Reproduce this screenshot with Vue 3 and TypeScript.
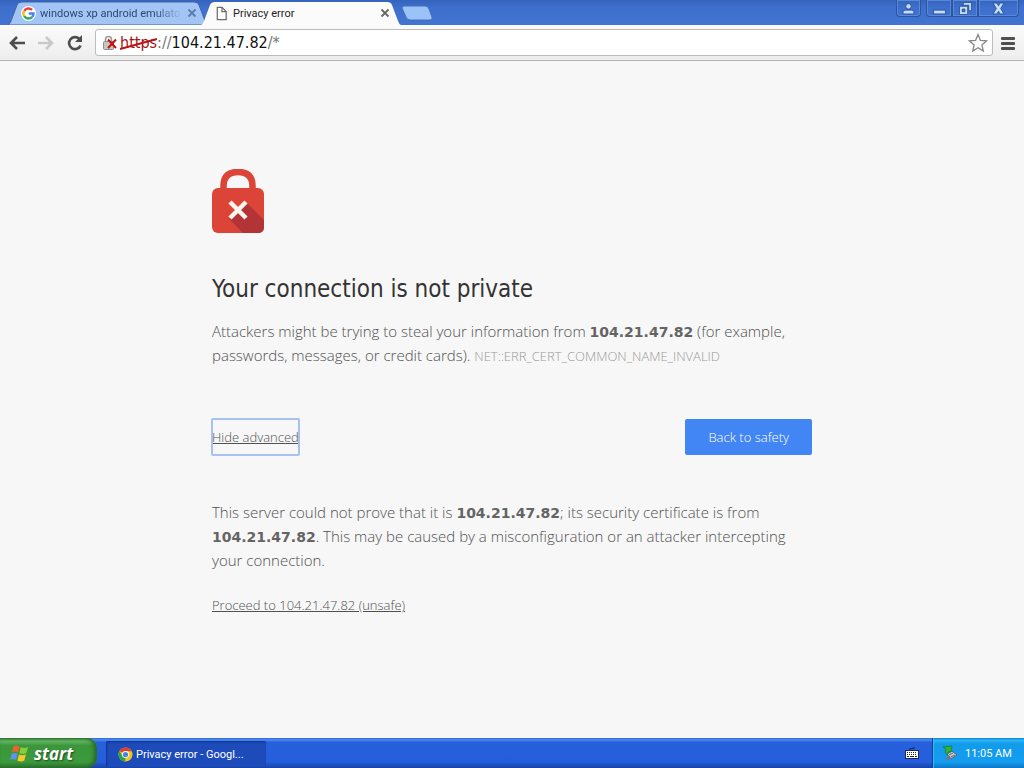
<script setup lang="ts">
import { ref } from 'vue'

const host = '104.21.47.82'
const address = ref(host)
const advancedOpen = ref(true)
</script>

<template>
  <div class="desktop">
    <header class="titlebar">
      <div class="tabs" role="tablist">
        <div class="tab" role="tab" aria-selected="false">
          <svg class="shape" viewBox="0 0 200 24" preserveAspectRatio="none" aria-hidden="true">
            <path d="M0 24Q2 23 3 20L9 4Q10 1 14 1H186Q190 1 191 4L197 20Q198 23 200 24Z" fill="#a3c5f6" stroke="#3e65a8" />
          </svg>
          <svg class="favicon" viewBox="0 0 16 16" aria-hidden="true">
            <circle cx="8" cy="8" r="8" fill="#fff" />
            <g fill="none" stroke-width="2.5">
              <path d="M3.4 5.2A5.4 5.4 0 0 1 11.8 4.2" stroke="#ea4335" />
              <path d="M3.4 5.2A5.4 5.4 0 0 0 3.4 10.8" stroke="#fbbc05" />
              <path d="M3.4 10.8A5.4 5.4 0 0 0 11.7 11.9" stroke="#34a853" />
              <path d="M11.7 11.9A5.4 5.4 0 0 0 13.4 8H8.3" stroke="#4285f4" />
            </g>
          </svg>
          <span class="tab-title faded">windows xp android emulato</span>
          <button class="tab-close" type="button" aria-label="Close tab">
            <svg viewBox="0 0 10 10"><path d="M1.5 1.5L8.5 8.5M8.5 1.5L1.5 8.5" stroke="#5b7cae" stroke-width="1.8" /></svg>
          </button>
        </div>
        <div class="tab active" role="tab" aria-selected="true">
          <svg class="shape" viewBox="0 0 200 24" preserveAspectRatio="none" aria-hidden="true">
            <path d="M0 24Q2 23 3 20L9 4Q10 1 14 1H186Q190 1 191 4L197 20Q198 23 200 24Z" fill="#fbfbfb" />
          </svg>
          <svg class="favicon" viewBox="0 0 16 16" aria-hidden="true">
            <path d="M3.5 1.5H8.5L13 6V14.5H3.5Z" fill="#fff" stroke="#6b6b6b" stroke-width="1.3" />
            <path d="M8.5 1.5V6H13" fill="none" stroke="#6b6b6b" stroke-width="1.3" />
          </svg>
          <span class="tab-title">Privacy error</span>
          <button class="tab-close" type="button" aria-label="Close tab">
            <svg viewBox="0 0 10 10"><path d="M1.5 1.5L8.5 8.5M8.5 1.5L1.5 8.5" stroke="#666" stroke-width="1.8" /></svg>
          </button>
        </div>
        <button class="new-tab" type="button" aria-label="New tab">
          <svg viewBox="0 0 32 16"><path d="M3 1H24Q27 1 28 4L31 12Q32 15 29 15H9Q6 15 5 12L1 3Q1 1 3 1Z" fill="#9cc3f7" stroke="#4470b8" /></svg>
        </button>
      </div>
      <div class="window-buttons">
        <button class="win user" type="button" aria-label="User">
          <svg viewBox="0 0 12 12"><circle cx="6" cy="4" r="2.5" /><path d="M1 11V9Q1 7.500 3 7.500H9Q11 7.500 11 9V11Z" /></svg>
        </button>
        <button class="win min" type="button" aria-label="Minimize">
          <svg viewBox="0 0 12 12"><rect x=".5" y="7.500" width="11" height="3.500" /></svg>
        </button>
        <button class="win max" type="button" aria-label="Restore">
          <svg viewBox="0 0 12 12"><path fill-rule="evenodd" d="M4 .5H11.5V8H9V3H4ZM.5 4H8V11.5H.5ZM3 6.5V9H5.5V6.5Z" /></svg>
        </button>
        <button class="win close" type="button" aria-label="Close">
          <svg viewBox="0 0 12 12"><path d="M1 1H4.5L6 3.5 7.500 1H11L8 6 11 11H7.500L6 8.500 4.500 11H1L4 6Z" /></svg>
        </button>
      </div>
    </header>

    <nav class="toolbar" aria-label="Navigation">
      <button class="nav" type="button" aria-label="Back">
        <svg viewBox="0 0 18 18"><path d="M17 9H4M9 3L3 9L9 15" fill="none" stroke="#4d4d4d" stroke-width="2.600" /></svg>
      </button>
      <button class="nav" type="button" aria-label="Forward" disabled>
        <svg viewBox="0 0 18 18"><path d="M1 9H14M9 3L15 9L9 15" fill="none" stroke="#c9c9c9" stroke-width="2.600" /></svg>
      </button>
      <button class="nav" type="button" aria-label="Reload">
        <svg viewBox="0 0 18 18"><path d="M14.600 11.500A6 6 0 1 1 13.300 4.800" fill="none" stroke="#4d4d4d" stroke-width="2.600" /><path d="M16 1V8H9Z" fill="#4d4d4d" /></svg>
      </button>
      <div class="omnibox">
        <svg class="broken-lock" viewBox="0 0 16 16" aria-hidden="true">
          <path d="M3.500 7V4.500Q3.500 1.500 6.500 1.500T9.500 4.500V7" fill="none" stroke="#999" stroke-width="1.600" />
          <rect x="1.500" y="6.500" width="10" height="8" rx="1" fill="#c8c4c0" stroke="#8f8f8f" />
          <path d="M6 4.500L14 13M14 4.500L6 13" stroke="#bd1410" stroke-width="2" />
        </svg>
        <span class="scheme">https<svg viewBox="0 0 36 12" preserveAspectRatio="none" aria-hidden="true"><path d="M0 11L36 1" stroke="#bb1018" stroke-width="2" /></svg></span>
        <label class="muted" for="address">://</label>
        <input id="address" v-model="address" class="address" type="text" size="10" />
        <span class="muted rest">/*</span>
        <button class="star" type="button" aria-label="Bookmark">
          <svg viewBox="0 0 20 20"><path d="M10 1.500L12.400 7.300L18.600 7.800L13.900 11.900L15.300 18L10 14.700L4.700 18L6.100 11.900L1.400 7.800L7.600 7.300Z" fill="#fff" stroke="#888" stroke-width="1.300" /></svg>
        </button>
      </div>
      <button class="menu" type="button" aria-label="Menu">
        <svg viewBox="0 0 14 14"><path d="M1 2.500H13M1 7.500H13M1 12.500H13" stroke="#505050" stroke-width="2.800" stroke-linecap="round" /></svg>
      </button>
    </nav>

    <main class="page">
      <div class="interstitial">
        <svg class="lock" viewBox="0 0 52 64" aria-hidden="true">
          <path d="M11.500 22V17Q11.500 3 26 3T40.500 17V22" fill="none" stroke="#db4437" stroke-width="6.500" />
          <rect y="19" width="52" height="45" rx="6" fill="#db4437" />
          <path d="M34 33L52 51V58Q52 64 46 64H31L17 50L26 41Z" fill="#b33436" />
          <path d="M18 33L34 49M34 33L18 49" stroke="#fff5ef" stroke-width="4.500" />
        </svg>
        <h1>Your connection is not private</h1>
        <p>
          Attackers might be trying to steal your information from <strong>{{ host }}</strong> (for example, passwords, messages, or credit cards).
          <span class="code">NET::ERR_CERT_COMMON_NAME_INVALID</span>
        </p>
        <div class="actions">
          <button class="details" type="button" :aria-expanded="advancedOpen" @click="advancedOpen = !advancedOpen">
            {{ advancedOpen ? 'Hide advanced' : 'Advanced' }}
          </button>
          <button class="safety" type="button">Back to safety</button>
        </div>
        <section v-if="advancedOpen">
          <p>
            This server could not prove that it is <strong>{{ host }}</strong>; its security certificate is from
            <strong>{{ host }}</strong>. This may be caused by a misconfiguration or an attacker intercepting your connection.
          </p>
          <a class="proceed" href="#proceed">Proceed to {{ host }} (unsafe)</a>
        </section>
      </div>
    </main>

    <footer class="taskbar">
      <button class="start" type="button">
        <svg viewBox="0 0 20 20" aria-hidden="true">
          <path d="M3.500 3.500Q6.500 1.500 9.500 3.500L8 9.500Q5 7.500 2 9.500Z" fill="#f0602c" />
          <path d="M10.800 4Q14 6 18 4L16.300 10Q13 12 9.300 10Z" fill="#86cf3c" />
          <path d="M1.700 10.800Q5 9 7.700 10.800L6 17Q3 15 0 17Z" fill="#5b94f0" />
          <path d="M9 11.400Q12 13 16 11.400L14.300 17.500Q11 19.500 7.300 17.500Z" fill="#fbc52c" />
        </svg>
        <span>start</span>
      </button>
      <button class="task" type="button">
        <svg viewBox="0 0 16 16" aria-hidden="true">
          <circle cx="8" cy="8" r="7.500" fill="#f5c51d" />
          <path d="M8 8L1.500 4.200A7.500 7.500 0 0 1 14.600 4.500H8Z" fill="#df3f30" />
          <path d="M1.500 4.200L5 10L8 11.500L7.500 15.500A7.500 7.500 0 0 1 1.500 4.200Z" fill="#2fa24e" />
          <circle cx="8" cy="8" r="3.700" fill="#fff" />
          <circle cx="8" cy="8" r="2.800" fill="#4485e8" />
        </svg>
        <span>Privacy error - Googl...</span>
      </button>
      <svg class="keyboard" viewBox="0 0 14 14" aria-hidden="true">
        <path d="M5 4V2.500H9V1" fill="none" stroke="#10246e" />
        <rect x=".5" y="4.500" width="13" height="8" fill="#fff" stroke="#17275e" />
        <path d="M2 6.500H12M2 8.500H12" stroke="#222" stroke-dasharray="1 1" />
        <path d="M2 10.500H12" stroke="#222" stroke-dasharray="2 1 4 1" />
      </svg>
      <div class="tray">
        <svg viewBox="0 0 16 16" aria-hidden="true">
          <path d="M5 9L10 6L15 10L9 14Z" fill="#c3cad0" stroke="#566270" />
          <path d="M7 10L11 8M9 12L13 10" stroke="#59646f" />
          <path d="M3 13L8 11L9 14L5 15.500Z" fill="#687a89" />
          <path d="M1 2L10 1L9 7L7 6L5 10L3 7L4 4Z" fill="#2eb53a" stroke="#15792b" stroke-width=".7" />
        </svg>
        <time>11:05 AM</time>
      </div>
    </footer>
  </div>
</template>

<style>
body { margin: 0; }
</style>

<style scoped>
* { box-sizing: border-box; }
.desktop {
  min-height: 100vh;
  display: flex;
  flex-direction: column;
  background: #f7f7f7;
  font-family: "Open Sans", "Noto Sans", sans-serif;
}
button { margin: 0; padding: 0; border: 0; background: none; font: inherit; color: inherit; }
svg { display: block; flex: none; }
.titlebar {
  height: 25px;
  display: flex;
  justify-content: space-between;
  align-items: flex-start;
  background: linear-gradient(#3564bc, #3e6fcd 30%, #4274d2);
}
.tabs { display: flex; padding: 1px 0 0 8px; }
.tab {
  position: relative;
  isolation: isolate;
  width: 200px;
  height: 24px;
  display: flex;
  align-items: center;
  gap: 4px;
  padding: 0 11px 0 13px;
  font-family: Roboto, sans-serif;
  font-size: 11px;
  color: #2b4672;
}
.tab.active { margin-left: -7px; color: #1e1e1e; z-index: 1; }
.shape { position: absolute; inset: 0; z-index: -1; width: 100%; height: 100%; }
.favicon { width: 15px; height: 15px; }
.tab-title { flex: 1; white-space: nowrap; }
.faded { mask-image: linear-gradient(90deg, #000 80%, transparent); }
.tab-close svg { width: 10px; height: 10px; }
.new-tab { align-self: flex-start; margin-top: 4px; }
.new-tab svg { width: 32px; height: 16px; }
.window-buttons { display: flex; padding-right: 5px; }
.win {
  height: 17px;
  display: grid;
  place-items: center;
  border: 1px solid #2c559f;
  border-top: 0;
  border-radius: 0 0 4px 4px;
  box-shadow: inset 0 0 0 1px #5a88d8;
}
.win svg { width: 13px; height: 13px; fill: #c4dcfb; stroke: #234684; stroke-width: .7; }
.user { width: 25px; margin-right: 5px; }
.min { width: 26px; border-radius: 0 0 0 4px; }
.max { width: 26px; border-radius: 0; }
.close { width: 41px; border-radius: 0 0 4px 0; }
.toolbar {
  height: 36px;
  display: flex;
  align-items: center;
  gap: 11px;
  padding: 0 9px 0 8px;
  background: linear-gradient(#fbfbfb, #ededed);
  border-bottom: 1px solid #b5b5b5;
}
.nav svg { width: 18px; height: 18px; }
.omnibox {
  flex: 1;
  height: 27px;
  display: flex;
  align-items: center;
  padding: 0 4px 0 6px;
  background: #fff;
  border: 1px solid #bcbcbc;
  border-radius: 3px;
  font-family: "DejaVu Sans Condensed", "DejaVu Sans", sans-serif;
  font-stretch: condensed;
  font-size: 16px;
}
.broken-lock { width: 16px; height: 16px; margin-right: 2px; }
.scheme { position: relative; color: #a31515; }
.scheme svg { position: absolute; left: 0; top: 5px; width: 100%; height: 12px; }
.muted { color: #777; }
.rest { flex: 1; }
.address {
  field-sizing: content;
  padding: 0;
  border: 0;
  outline: 0;
  background: none;
  font: inherit;
  color: #111;
}
.star svg { width: 20px; height: 20px; }
.menu { margin-left: -3px; }
.menu svg { width: 14px; height: 14px; }
.page { flex: 1; padding: 108px 24px 24px; }
.interstitial { max-width: 600px; margin: 0 auto; color: #505050; font-size: 15px; font-weight: 300; line-height: 24px; }
.lock { width: 52px; height: 64px; margin-bottom: 41px; }
h1 {
  margin: 0 0 14px;
  font-family: "DejaVu Sans Condensed", "DejaVu Sans", sans-serif;
  font-stretch: condensed;
  font-size: 24px;
  line-height: 31px;
  font-weight: 400;
  color: #333;
}
p { margin: 0; }
strong { font: bold 14px/1 "DejaVu Sans", sans-serif; color: #646464; }
.code { font-size: 13px; color: #999; }
.actions { display: flex; justify-content: space-between; margin: 51px 0 45px; font-size: 13px; }
.details {
  height: 36px;
  text-decoration: underline;
  border-radius: 1px;
  outline: 2px solid #a5c2f1;
  outline-offset: -1px;
}
.safety { height: 36px; padding: 0 23px; background: #4285f4; color: #fff; border-radius: 2px; }
.proceed { display: inline-block; margin-top: 21px; font-size: 13px; color: #505050; }
.taskbar {
  height: 30px;
  display: flex;
  align-items: stretch;
  color: #fff;
  font-family: Roboto, sans-serif;
  font-size: 11px;
  background: linear-gradient(#3168d5, #4a8bf1 6%, #2860db 14%, #245edc 80%, #1941a5);
}
.start {
  width: 97px;
  display: flex;
  align-items: center;
  gap: 4px;
  padding-left: 10px;
  border-radius: 0 10px 10px 0;
  background: linear-gradient(#388238, #66b866 10%, #3c963c 25%, #3c9a3c 80%, #2c712c);
  box-shadow: inset -3px 0 4px #24682a;
  font: italic bold 17px "Open Sans", sans-serif;
  text-shadow: 1px 1px 2px #1d471d;
}
.start svg { width: 20px; height: 20px; }
.task {
  width: 160px;
  height: 26px;
  margin: 3px auto 0 9px;
  display: flex;
  align-items: center;
  gap: 3px;
  padding: 0 12px;
  border-radius: 2px;
  background: #1d4bb9;
  box-shadow: inset 1px 1px 2px #12358e;
  white-space: nowrap;
}
.task svg { width: 15px; height: 15px; }
.keyboard { width: 14px; height: 14px; align-self: center; margin-right: 13px; }
.tray {
  width: 92px;
  display: flex;
  align-items: center;
  gap: 7px;
  padding-left: 9px;
  border-left: 1px solid #0d3d8c;
  background: linear-gradient(#0e89d8, #2bb4f4 8%, #129aeb 20%, #149cf0 80%, #0d74c4);
  box-shadow: inset 1px 0 #35bdf5;
}
.tray svg { width: 16px; height: 16px; }
</style>
